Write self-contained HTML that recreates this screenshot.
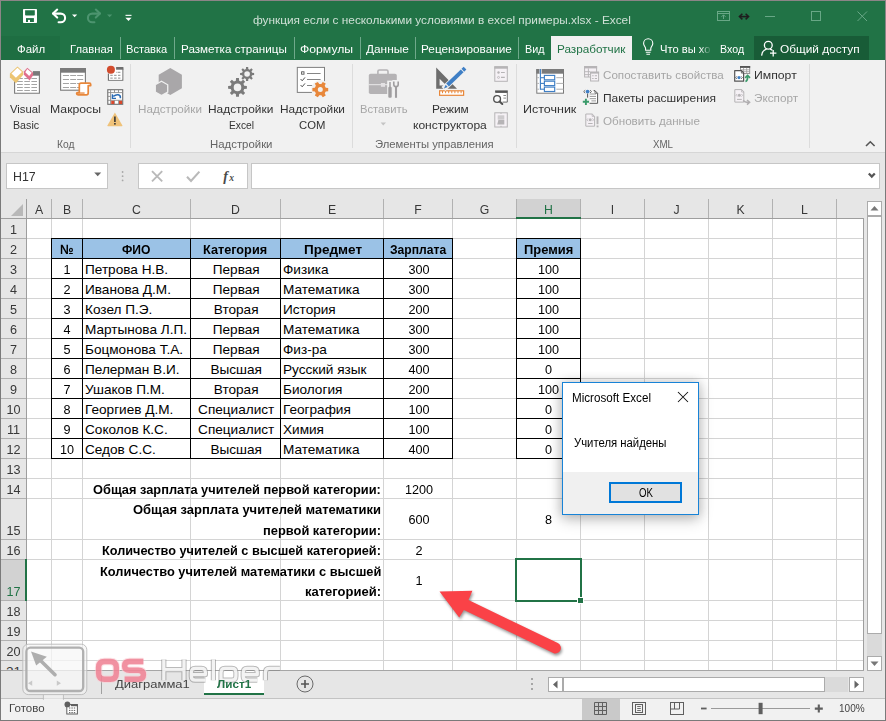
<!DOCTYPE html><html><head><meta charset="utf-8"><title>Excel</title><style>
*{box-sizing:border-box;margin:0;padding:0}
html,body{width:886px;height:721px;overflow:hidden;background:#fff}
body{font-family:"Liberation Sans",sans-serif;font-size:12px;color:#222;position:relative}
.a{position:absolute;white-space:nowrap}
.t{position:absolute;white-space:nowrap;line-height:1;transform-origin:0 50%}
.c{position:absolute;white-space:nowrap;line-height:1;text-align:center}
.r{position:absolute;white-space:nowrap;line-height:1;text-align:right}
.cell{font-size:13.6px;color:#000}
.hd{font-size:13.6px;color:#383838}
.nw{transform:scaleX(.93);transform-origin:50% 50%}
.bw{transform:scaleX(.945);transform-origin:50% 50%}
.cw{transform:scaleX(.9);transform-origin:50% 50%}
svg{overflow:visible}
</style></head><body>
<div class="a" style="left:0px;top:0px;width:886px;height:721px;background:#f1f1f1;"></div>
<div class="a" style="left:0px;top:0px;width:886px;height:60px;background:#217346;"></div>
<div class="t" style="left:253.00px;top:14.0px;font-size:11.6px;color:#cfe0d6;transform:scaleX(1.0201);">функция если с несколькими условиями в excel примеры.xlsx - Excel</div>
<div class="a" style="left:1px;top:36px;width:59px;height:24px;background:#1e6e42;"></div>
<div class="t" style="left:16.70px;top:43.1px;font-size:11.6px;color:#fff;transform:scaleX(0.9861);">Файл</div>
<div class="t" style="left:69.50px;top:43.1px;font-size:11.6px;color:#fff;transform:scaleX(0.9699);">Главная</div>
<div class="t" style="left:126.30px;top:43.1px;font-size:11.6px;color:#fff;transform:scaleX(0.9573);">Вставка</div>
<div class="t" style="left:181.40px;top:43.1px;font-size:11.6px;color:#fff;transform:scaleX(1.0059);">Разметка страницы</div>
<div class="t" style="left:300.40px;top:43.1px;font-size:11.6px;color:#fff;transform:scaleX(1.0528);">Формулы</div>
<div class="t" style="left:366.20px;top:43.1px;font-size:11.6px;color:#fff;transform:scaleX(1.0224);">Данные</div>
<div class="t" style="left:421.30px;top:43.1px;font-size:11.6px;color:#fff;transform:scaleX(1.0154);">Рецензирование</div>
<div class="t" style="left:524.50px;top:43.1px;font-size:11.6px;color:#fff;transform:scaleX(0.9317);">Вид</div>
<div class="a" style="left:120px;top:37px;width:1px;height:22px;background:#6fa98b;"></div>
<div class="a" style="left:174px;top:37px;width:1px;height:22px;background:#6fa98b;"></div>
<div class="a" style="left:294px;top:37px;width:1px;height:22px;background:#6fa98b;"></div>
<div class="a" style="left:360px;top:37px;width:1px;height:22px;background:#6fa98b;"></div>
<div class="a" style="left:415px;top:37px;width:1px;height:22px;background:#6fa98b;"></div>
<div class="a" style="left:518px;top:37px;width:1px;height:22px;background:#6fa98b;"></div>
<div class="a" style="left:551px;top:36px;width:81px;height:25px;background:#f1f1f1;"></div>
<div class="t" style="left:556.50px;top:43.1px;font-size:11.6px;color:#217346;transform:scaleX(1.0117);">Разработчик</div>
<div class="t" style="left:659.50px;top:43.1px;font-size:11.6px;color:#fff;transform:scaleX(0.9628);">Что вы хо</div>
<div class="a" style="left:700px;top:38px;width:14px;height:21px;background:linear-gradient(90deg,rgba(33,115,70,0),#217346 85%);"></div>
<div class="t" style="left:719.60px;top:43.1px;font-size:11.6px;color:#fff;transform:scaleX(0.9189);">Вход</div>
<div class="a" style="left:754px;top:36px;width:115px;height:24px;background:#185c37;"></div>
<div class="t" style="left:780.40px;top:43.1px;font-size:11.6px;color:#fff;transform:scaleX(1.0215);">Общий доступ</div>
<div class="a" style="left:1px;top:60px;width:884px;height:92px;background:#f1f1f1;"></div>
<div class="a" style="left:1px;top:152px;width:884px;height:1px;background:#d6d6d6;"></div>
<div class="a" style="left:130px;top:64px;width:1px;height:84px;background:#dcdcdc;"></div>
<div class="a" style="left:352px;top:64px;width:1px;height:84px;background:#dcdcdc;"></div>
<div class="a" style="left:516px;top:64px;width:1px;height:84px;background:#dcdcdc;"></div>
<div class="a" style="left:809px;top:64px;width:1px;height:84px;background:#dcdcdc;"></div>
<div class="t" style="left:10.30px;top:103.7px;font-size:11.5px;color:#333;transform:scaleX(0.9767);">Visual</div>
<div class="t" style="left:12.70px;top:119.8px;font-size:11.5px;color:#333;transform:scaleX(0.9280);">Basic</div>
<div class="t" style="left:49.50px;top:103.7px;font-size:11.5px;color:#333;transform:scaleX(1.0646);">Макросы</div>
<div class="t" style="left:56.80px;top:138.8px;font-size:11.5px;color:#646464;transform:scaleX(0.8923);">Код</div>
<div class="t" style="left:138.00px;top:103.7px;font-size:11.5px;color:#a6a6a6;transform:scaleX(1.0139);">Надстройки</div>
<div class="t" style="left:208.00px;top:103.7px;font-size:11.5px;color:#333;transform:scaleX(1.0345);">Надстройки</div>
<div class="t" style="left:229.00px;top:119.8px;font-size:11.5px;color:#333;transform:scaleX(0.8889);">Excel</div>
<div class="t" style="left:280.00px;top:103.7px;font-size:11.5px;color:#333;transform:scaleX(1.0297);">Надстройки</div>
<div class="t" style="left:299.40px;top:119.8px;font-size:11.5px;color:#333;transform:scaleX(0.9823);">COM</div>
<div class="t" style="left:209.80px;top:138.8px;font-size:11.5px;color:#646464;transform:scaleX(0.9901);">Надстройки</div>
<div class="t" style="left:359.50px;top:103.7px;font-size:11.5px;color:#a6a6a6;transform:scaleX(0.9744);">Вставить</div>
<div class="t" style="left:432.00px;top:103.7px;font-size:11.5px;color:#333;transform:scaleX(1.0366);">Режим</div>
<div class="t" style="left:412.60px;top:119.8px;font-size:11.5px;color:#333;transform:scaleX(1.0482);">конструктора</div>
<div class="t" style="left:375.20px;top:138.8px;font-size:11.5px;color:#646464;transform:scaleX(0.9792);">Элементы управления</div>
<div class="t" style="left:523.20px;top:103.7px;font-size:11.5px;color:#333;transform:scaleX(1.0863);">Источник</div>
<div class="t" style="left:602.70px;top:70.2px;font-size:11.5px;color:#a6a6a6;transform:scaleX(1.0107);">Сопоставить свойства</div>
<div class="t" style="left:602.70px;top:93.2px;font-size:11.5px;color:#333;transform:scaleX(1.0406);">Пакеты расширения</div>
<div class="t" style="left:602.70px;top:116.2px;font-size:11.5px;color:#a6a6a6;transform:scaleX(1.0120);">Обновить данные</div>
<div class="t" style="left:753.70px;top:70.2px;font-size:11.5px;color:#333;transform:scaleX(1.0634);">Импорт</div>
<div class="t" style="left:753.70px;top:93.2px;font-size:11.5px;color:#a6a6a6;transform:scaleX(1.0197);">Экспорт</div>
<div class="t" style="left:652.50px;top:138.8px;font-size:11.5px;color:#646464;transform:scaleX(0.8466);">XML</div>
<div class="a" style="left:1px;top:153px;width:884px;height:46px;background:#e6e6e6;"></div>
<div class="a" style="left:6px;top:163px;width:102px;height:26px;background:#fff;border:1px solid #c6c6c6"></div>
<div class="t" style="left:13.40px;top:171.3px;font-size:12.5px;color:#333;transform:scaleX(0.9880);">H17</div>
<div class="a" style="left:138px;top:163px;width:110px;height:26px;background:#fff;border:1px solid #c6c6c6"></div>
<div class="a" style="left:251px;top:163px;width:629px;height:26px;background:#fff;border:1px solid #c6c6c6"></div>
<div class="a" style="left:1px;top:199px;width:862px;height:471px;background:#fff;"></div>
<div class="a" style="left:1px;top:199px;width:862px;height:19px;background:#e6e6e6;"></div>
<div class="a" style="left:1px;top:199px;width:25px;height:471px;background:#e6e6e6;"></div>
<div class="a" style="left:517px;top:199px;width:63px;height:19px;background:#d2d2d2;"></div>
<div class="a" style="left:1px;top:560px;width:25px;height:40px;background:#d2d2d2;"></div>
<div class="a" style="left:26px;top:219px;width:1px;height:451px;background:#d4d4d4;"></div>
<div class="a" style="left:51px;top:219px;width:1px;height:451px;background:#d4d4d4;"></div>
<div class="a" style="left:51px;top:199px;width:1px;height:19px;background:#b1b1b1;"></div>
<div class="a" style="left:82px;top:219px;width:1px;height:451px;background:#d4d4d4;"></div>
<div class="a" style="left:82px;top:199px;width:1px;height:19px;background:#b1b1b1;"></div>
<div class="a" style="left:190px;top:219px;width:1px;height:451px;background:#d4d4d4;"></div>
<div class="a" style="left:190px;top:199px;width:1px;height:19px;background:#b1b1b1;"></div>
<div class="a" style="left:280px;top:219px;width:1px;height:451px;background:#d4d4d4;"></div>
<div class="a" style="left:280px;top:199px;width:1px;height:19px;background:#b1b1b1;"></div>
<div class="a" style="left:383px;top:219px;width:1px;height:451px;background:#d4d4d4;"></div>
<div class="a" style="left:383px;top:199px;width:1px;height:19px;background:#b1b1b1;"></div>
<div class="a" style="left:452px;top:219px;width:1px;height:451px;background:#d4d4d4;"></div>
<div class="a" style="left:452px;top:199px;width:1px;height:19px;background:#b1b1b1;"></div>
<div class="a" style="left:516px;top:219px;width:1px;height:451px;background:#d4d4d4;"></div>
<div class="a" style="left:516px;top:199px;width:1px;height:19px;background:#b1b1b1;"></div>
<div class="a" style="left:580px;top:219px;width:1px;height:451px;background:#d4d4d4;"></div>
<div class="a" style="left:580px;top:199px;width:1px;height:19px;background:#b1b1b1;"></div>
<div class="a" style="left:644px;top:219px;width:1px;height:451px;background:#d4d4d4;"></div>
<div class="a" style="left:644px;top:199px;width:1px;height:19px;background:#b1b1b1;"></div>
<div class="a" style="left:708px;top:219px;width:1px;height:451px;background:#d4d4d4;"></div>
<div class="a" style="left:708px;top:199px;width:1px;height:19px;background:#b1b1b1;"></div>
<div class="a" style="left:772px;top:219px;width:1px;height:451px;background:#d4d4d4;"></div>
<div class="a" style="left:772px;top:199px;width:1px;height:19px;background:#b1b1b1;"></div>
<div class="a" style="left:836px;top:219px;width:1px;height:451px;background:#d4d4d4;"></div>
<div class="a" style="left:836px;top:199px;width:1px;height:19px;background:#b1b1b1;"></div>
<div class="a" style="left:27px;top:218px;width:836px;height:1px;background:#d4d4d4;"></div>
<div class="a" style="left:27px;top:238px;width:836px;height:1px;background:#d4d4d4;"></div>
<div class="a" style="left:1px;top:238px;width:25px;height:1px;background:#b1b1b1;"></div>
<div class="a" style="left:27px;top:258px;width:836px;height:1px;background:#d4d4d4;"></div>
<div class="a" style="left:1px;top:258px;width:25px;height:1px;background:#b1b1b1;"></div>
<div class="a" style="left:27px;top:278px;width:836px;height:1px;background:#d4d4d4;"></div>
<div class="a" style="left:1px;top:278px;width:25px;height:1px;background:#b1b1b1;"></div>
<div class="a" style="left:27px;top:298px;width:836px;height:1px;background:#d4d4d4;"></div>
<div class="a" style="left:1px;top:298px;width:25px;height:1px;background:#b1b1b1;"></div>
<div class="a" style="left:27px;top:318px;width:836px;height:1px;background:#d4d4d4;"></div>
<div class="a" style="left:1px;top:318px;width:25px;height:1px;background:#b1b1b1;"></div>
<div class="a" style="left:27px;top:338px;width:836px;height:1px;background:#d4d4d4;"></div>
<div class="a" style="left:1px;top:338px;width:25px;height:1px;background:#b1b1b1;"></div>
<div class="a" style="left:27px;top:358px;width:836px;height:1px;background:#d4d4d4;"></div>
<div class="a" style="left:1px;top:358px;width:25px;height:1px;background:#b1b1b1;"></div>
<div class="a" style="left:27px;top:378px;width:836px;height:1px;background:#d4d4d4;"></div>
<div class="a" style="left:1px;top:378px;width:25px;height:1px;background:#b1b1b1;"></div>
<div class="a" style="left:27px;top:398px;width:836px;height:1px;background:#d4d4d4;"></div>
<div class="a" style="left:1px;top:398px;width:25px;height:1px;background:#b1b1b1;"></div>
<div class="a" style="left:27px;top:418px;width:836px;height:1px;background:#d4d4d4;"></div>
<div class="a" style="left:1px;top:418px;width:25px;height:1px;background:#b1b1b1;"></div>
<div class="a" style="left:27px;top:438px;width:836px;height:1px;background:#d4d4d4;"></div>
<div class="a" style="left:1px;top:438px;width:25px;height:1px;background:#b1b1b1;"></div>
<div class="a" style="left:27px;top:458px;width:836px;height:1px;background:#d4d4d4;"></div>
<div class="a" style="left:1px;top:458px;width:25px;height:1px;background:#b1b1b1;"></div>
<div class="a" style="left:27px;top:478px;width:836px;height:1px;background:#d4d4d4;"></div>
<div class="a" style="left:1px;top:478px;width:25px;height:1px;background:#b1b1b1;"></div>
<div class="a" style="left:27px;top:498px;width:836px;height:1px;background:#d4d4d4;"></div>
<div class="a" style="left:1px;top:498px;width:25px;height:1px;background:#b1b1b1;"></div>
<div class="a" style="left:27px;top:539px;width:836px;height:1px;background:#d4d4d4;"></div>
<div class="a" style="left:1px;top:539px;width:25px;height:1px;background:#b1b1b1;"></div>
<div class="a" style="left:27px;top:559px;width:836px;height:1px;background:#d4d4d4;"></div>
<div class="a" style="left:1px;top:559px;width:25px;height:1px;background:#b1b1b1;"></div>
<div class="a" style="left:27px;top:600px;width:836px;height:1px;background:#d4d4d4;"></div>
<div class="a" style="left:1px;top:600px;width:25px;height:1px;background:#b1b1b1;"></div>
<div class="a" style="left:27px;top:620px;width:836px;height:1px;background:#d4d4d4;"></div>
<div class="a" style="left:1px;top:620px;width:25px;height:1px;background:#b1b1b1;"></div>
<div class="a" style="left:27px;top:640px;width:836px;height:1px;background:#d4d4d4;"></div>
<div class="a" style="left:1px;top:640px;width:25px;height:1px;background:#b1b1b1;"></div>
<div class="a" style="left:27px;top:660px;width:836px;height:1px;background:#d4d4d4;"></div>
<div class="a" style="left:1px;top:660px;width:25px;height:1px;background:#b1b1b1;"></div>
<div class="a" style="left:1px;top:218px;width:862px;height:1px;background:#9e9e9e;"></div>
<div class="a" style="left:26px;top:199px;width:1px;height:471px;background:#9e9e9e;"></div>
<div class="a" style="left:863px;top:218px;width:1px;height:452px;background:#9e9e9e;"></div>
<div class="a" style="left:516px;top:217px;width:65px;height:2px;background:#217346;"></div>
<div class="a" style="left:25px;top:559px;width:2px;height:42px;background:#217346;"></div>
<div class="c hd cw" style="left:27px;width:24px;top:203px;color:#383838">A</div>
<div class="c hd cw" style="left:52px;width:30px;top:203px;color:#383838">B</div>
<div class="c hd cw" style="left:83px;width:107px;top:203px;color:#383838">C</div>
<div class="c hd cw" style="left:191px;width:89px;top:203px;color:#383838">D</div>
<div class="c hd cw" style="left:281px;width:102px;top:203px;color:#383838">E</div>
<div class="c hd cw" style="left:384px;width:68px;top:203px;color:#383838">F</div>
<div class="c hd cw" style="left:453px;width:63px;top:203px;color:#383838">G</div>
<div class="c hd cw" style="left:517px;width:63px;top:203px;color:#217346">H</div>
<div class="c hd cw" style="left:581px;width:63px;top:203px;color:#383838">I</div>
<div class="c hd cw" style="left:645px;width:63px;top:203px;color:#383838">J</div>
<div class="c hd cw" style="left:709px;width:63px;top:203px;color:#383838">K</div>
<div class="c hd cw" style="left:773px;width:63px;top:203px;color:#383838">L</div>
<div class="c hd nw" style="left:1px;width:25px;top:223px;color:#383838">1</div>
<div class="c hd nw" style="left:1px;width:25px;top:243px;color:#383838">2</div>
<div class="c hd nw" style="left:1px;width:25px;top:263px;color:#383838">3</div>
<div class="c hd nw" style="left:1px;width:25px;top:283px;color:#383838">4</div>
<div class="c hd nw" style="left:1px;width:25px;top:303px;color:#383838">5</div>
<div class="c hd nw" style="left:1px;width:25px;top:323px;color:#383838">6</div>
<div class="c hd nw" style="left:1px;width:25px;top:343px;color:#383838">7</div>
<div class="c hd nw" style="left:1px;width:25px;top:363px;color:#383838">8</div>
<div class="c hd nw" style="left:1px;width:25px;top:383px;color:#383838">9</div>
<div class="c hd nw" style="left:1px;width:25px;top:403px;color:#383838">10</div>
<div class="c hd nw" style="left:1px;width:25px;top:423px;color:#383838">11</div>
<div class="c hd nw" style="left:1px;width:25px;top:443px;color:#383838">12</div>
<div class="c hd nw" style="left:1px;width:25px;top:463px;color:#383838">13</div>
<div class="c hd nw" style="left:1px;width:25px;top:483px;color:#383838">14</div>
<div class="c hd nw" style="left:1px;width:25px;top:524px;color:#383838">15</div>
<div class="c hd nw" style="left:1px;width:25px;top:544px;color:#383838">16</div>
<div class="c hd nw" style="left:1px;width:25px;top:585px;color:#217346">17</div>
<div class="c hd nw" style="left:1px;width:25px;top:605px;color:#383838">18</div>
<div class="c hd nw" style="left:1px;width:25px;top:625px;color:#383838">19</div>
<div class="c hd nw" style="left:1px;width:25px;top:645px;color:#383838">20</div>
<div class="a" style="left:1px;top:660px;width:25px;height:10px;overflow:hidden"><div class="c hd" style="left:0;width:25px;top:5px">21</div></div>
<svg class="a" style="left:8px;top:203px;" width="16" height="14" viewBox="0 0 16 14"><path d="M15 1 L15 13 L3 13 Z" fill="#b8b8b8"/></svg>
<div class="a" style="left:52px;top:239px;width:401px;height:19px;background:#9bc2e6;"></div>
<div class="a" style="left:517px;top:239px;width:63px;height:19px;background:#9bc2e6;"></div>
<div class="a" style="left:51px;top:238px;width:402px;height:1px;background:#000;"></div>
<div class="a" style="left:516px;top:238px;width:65px;height:1px;background:#000;"></div>
<div class="a" style="left:51px;top:258px;width:402px;height:1px;background:#000;"></div>
<div class="a" style="left:516px;top:258px;width:65px;height:1px;background:#000;"></div>
<div class="a" style="left:51px;top:278px;width:402px;height:1px;background:#000;"></div>
<div class="a" style="left:516px;top:278px;width:65px;height:1px;background:#000;"></div>
<div class="a" style="left:51px;top:298px;width:402px;height:1px;background:#000;"></div>
<div class="a" style="left:516px;top:298px;width:65px;height:1px;background:#000;"></div>
<div class="a" style="left:51px;top:318px;width:402px;height:1px;background:#000;"></div>
<div class="a" style="left:516px;top:318px;width:65px;height:1px;background:#000;"></div>
<div class="a" style="left:51px;top:338px;width:402px;height:1px;background:#000;"></div>
<div class="a" style="left:516px;top:338px;width:65px;height:1px;background:#000;"></div>
<div class="a" style="left:51px;top:358px;width:402px;height:1px;background:#000;"></div>
<div class="a" style="left:516px;top:358px;width:65px;height:1px;background:#000;"></div>
<div class="a" style="left:51px;top:378px;width:402px;height:1px;background:#000;"></div>
<div class="a" style="left:516px;top:378px;width:65px;height:1px;background:#000;"></div>
<div class="a" style="left:51px;top:398px;width:402px;height:1px;background:#000;"></div>
<div class="a" style="left:516px;top:398px;width:65px;height:1px;background:#000;"></div>
<div class="a" style="left:51px;top:418px;width:402px;height:1px;background:#000;"></div>
<div class="a" style="left:516px;top:418px;width:65px;height:1px;background:#000;"></div>
<div class="a" style="left:51px;top:438px;width:402px;height:1px;background:#000;"></div>
<div class="a" style="left:516px;top:438px;width:65px;height:1px;background:#000;"></div>
<div class="a" style="left:51px;top:458px;width:402px;height:1px;background:#000;"></div>
<div class="a" style="left:516px;top:458px;width:65px;height:1px;background:#000;"></div>
<div class="a" style="left:51px;top:238px;width:1px;height:221px;background:#000;"></div>
<div class="a" style="left:82px;top:238px;width:1px;height:221px;background:#000;"></div>
<div class="a" style="left:190px;top:238px;width:1px;height:221px;background:#000;"></div>
<div class="a" style="left:280px;top:238px;width:1px;height:221px;background:#000;"></div>
<div class="a" style="left:383px;top:238px;width:1px;height:221px;background:#000;"></div>
<div class="a" style="left:452px;top:238px;width:1px;height:221px;background:#000;"></div>
<div class="a" style="left:516px;top:238px;width:1px;height:221px;background:#000;"></div>
<div class="a" style="left:580px;top:238px;width:1px;height:221px;background:#000;"></div>
<div class="t" style="left:60.20px;top:243.0px;font-size:13.6px;color:#000;font-weight:bold;transform:scaleX(0.8934);">№</div>
<div class="t" style="left:122.40px;top:243.0px;font-size:13.6px;color:#000;font-weight:bold;transform:scaleX(0.8910);">ФИО</div>
<div class="t" style="left:203.20px;top:243.0px;font-size:13.6px;color:#000;font-weight:bold;transform:scaleX(0.9340);">Категория</div>
<div class="t" style="left:303.70px;top:243.0px;font-size:13.6px;color:#000;font-weight:bold;transform:scaleX(0.9944);">Предмет</div>
<div class="t" style="left:390.00px;top:243.0px;font-size:13.6px;color:#000;font-weight:bold;transform:scaleX(0.8908);">Зарплата</div>
<div class="t" style="left:524.10px;top:243.0px;font-size:13.6px;color:#000;font-weight:bold;transform:scaleX(0.9502);">Премия</div>
<div class="c cell nw" style="left:52px;width:30px;top:263px;">1</div>
<div class="t cell" style="left:85px;top:263px;">Петрова Н.В.</div>
<div class="c cell" style="left:191.7px;width:89.0px;top:263px;">Первая</div>
<div class="t cell" style="left:283px;top:263px;">Физика</div>
<div class="c cell nw" style="left:384.8px;width:68.0px;top:263px;">300</div>
<div class="c cell nw" style="left:517px;width:63px;top:263px;">100</div>
<div class="c cell nw" style="left:52px;width:30px;top:283px;">2</div>
<div class="t cell" style="left:85px;top:283px;">Иванова Д.М.</div>
<div class="c cell" style="left:191.7px;width:89.0px;top:283px;">Первая</div>
<div class="t cell" style="left:283px;top:283px;">Математика</div>
<div class="c cell nw" style="left:384.8px;width:68.0px;top:283px;">300</div>
<div class="c cell nw" style="left:517px;width:63px;top:283px;">100</div>
<div class="c cell nw" style="left:52px;width:30px;top:303px;">3</div>
<div class="t cell" style="left:85px;top:303px;">Козел П.Э.</div>
<div class="c cell" style="left:191.7px;width:89.0px;top:303px;">Вторая</div>
<div class="t cell" style="left:283px;top:303px;">История</div>
<div class="c cell nw" style="left:384.8px;width:68.0px;top:303px;">200</div>
<div class="c cell nw" style="left:517px;width:63px;top:303px;">100</div>
<div class="c cell nw" style="left:52px;width:30px;top:323px;">4</div>
<div class="t cell" style="left:85px;top:323px;">Мартынова Л.П.</div>
<div class="c cell" style="left:191.7px;width:89.0px;top:323px;">Первая</div>
<div class="t cell" style="left:283px;top:323px;">Математика</div>
<div class="c cell nw" style="left:384.8px;width:68.0px;top:323px;">300</div>
<div class="c cell nw" style="left:517px;width:63px;top:323px;">100</div>
<div class="c cell nw" style="left:52px;width:30px;top:343px;">5</div>
<div class="t cell" style="left:85px;top:343px;">Боцмонова Т.А.</div>
<div class="c cell" style="left:191.7px;width:89.0px;top:343px;">Первая</div>
<div class="t cell" style="left:283px;top:343px;">Физ-ра</div>
<div class="c cell nw" style="left:384.8px;width:68.0px;top:343px;">300</div>
<div class="c cell nw" style="left:517px;width:63px;top:343px;">100</div>
<div class="c cell nw" style="left:52px;width:30px;top:363px;">6</div>
<div class="t cell" style="left:85px;top:363px;">Пелерман В.И.</div>
<div class="c cell" style="left:191.7px;width:89.0px;top:363px;">Высшая</div>
<div class="t cell" style="left:283px;top:363px;">Русский язык</div>
<div class="c cell nw" style="left:384.8px;width:68.0px;top:363px;">400</div>
<div class="c cell nw" style="left:517px;width:63px;top:363px;">0</div>
<div class="c cell nw" style="left:52px;width:30px;top:383px;">7</div>
<div class="t cell" style="left:85px;top:383px;">Ушаков П.М.</div>
<div class="c cell" style="left:191.7px;width:89.0px;top:383px;">Вторая</div>
<div class="t cell" style="left:283px;top:383px;">Биология</div>
<div class="c cell nw" style="left:384.8px;width:68.0px;top:383px;">200</div>
<div class="c cell nw" style="left:517px;width:63px;top:383px;">100</div>
<div class="c cell nw" style="left:52px;width:30px;top:403px;">8</div>
<div class="t cell" style="left:85px;top:403px;">Георгиев Д.М.</div>
<div class="c cell" style="left:191.7px;width:89.0px;top:403px;">Специалист</div>
<div class="t cell" style="left:283px;top:403px;">География</div>
<div class="c cell nw" style="left:384.8px;width:68.0px;top:403px;">100</div>
<div class="c cell nw" style="left:517px;width:63px;top:403px;">0</div>
<div class="c cell nw" style="left:52px;width:30px;top:423px;">9</div>
<div class="t cell" style="left:85px;top:423px;">Соколов К.С.</div>
<div class="c cell" style="left:191.7px;width:89.0px;top:423px;">Специалист</div>
<div class="t cell" style="left:283px;top:423px;">Химия</div>
<div class="c cell nw" style="left:384.8px;width:68.0px;top:423px;">100</div>
<div class="c cell nw" style="left:517px;width:63px;top:423px;">0</div>
<div class="c cell nw" style="left:52px;width:30px;top:443px;">10</div>
<div class="t cell" style="left:85px;top:443px;">Седов С.С.</div>
<div class="c cell" style="left:191.7px;width:89.0px;top:443px;">Высшая</div>
<div class="t cell" style="left:283px;top:443px;">Математика</div>
<div class="c cell nw" style="left:384.8px;width:68.0px;top:443px;">400</div>
<div class="c cell nw" style="left:517px;width:63px;top:443px;">0</div>
<div class="t" style="left:93.00px;top:483.0px;font-size:13.6px;color:#000;font-weight:bold;transform:scaleX(0.9423);">Общая зарплата учителей первой категории:</div>
<div class="t" style="left:133.00px;top:503.0px;font-size:13.6px;color:#000;font-weight:bold;transform:scaleX(0.9537);">Общая зарплата учителей математики</div>
<div class="t" style="left:263.00px;top:523.5px;font-size:13.6px;color:#000;font-weight:bold;transform:scaleX(0.9465);">первой категории:</div>
<div class="t" style="left:102.00px;top:544.0px;font-size:13.6px;color:#000;font-weight:bold;transform:scaleX(0.9341);">Количество учителей с высшей категорией:</div>
<div class="t" style="left:99.50px;top:564.7px;font-size:13.6px;color:#000;font-weight:bold;transform:scaleX(0.9436);">Количество учителей математики с высшей</div>
<div class="t" style="left:305.00px;top:584.5px;font-size:13.6px;color:#000;font-weight:bold;transform:scaleX(0.9565);">категорией:</div>
<div class="c cell nw" style="left:384.8px;width:68.0px;top:483px;">1200</div>
<div class="c cell nw" style="left:384.8px;width:68.0px;top:512.5px;">600</div>
<div class="c cell nw" style="left:384.8px;width:68.0px;top:544px;">2</div>
<div class="c cell nw" style="left:384.8px;width:68.0px;top:573.5px;">1</div>
<div class="c cell nw" style="left:517px;width:63px;top:512.5px;">8</div>
<div class="a" style="left:515px;top:558px;width:67px;height:44px;background:transparent;border:2px solid #217346"></div>
<div class="a" style="left:577px;top:597px;width:7px;height:7px;background:#217346;border:1px solid #fff"></div>
<div class="a" style="left:864px;top:199px;width:21px;height:472px;background:#e6e6e6;"></div>
<div class="a" style="left:863px;top:199px;width:1px;height:19px;background:#e6e6e6;"></div>
<div class="a" style="left:867px;top:201px;width:15px;height:15px;background:#fff;border:1px solid #ababab"></div>
<svg class="a" style="left:870px;top:205px;" width="9" height="6" viewBox="0 0 9 6"><path d="M0.5 5.5 L4.5 1 L8.5 5.5 Z" fill="#777"/></svg>
<div class="a" style="left:867px;top:216px;width:15px;height:418px;background:#fff;border:1px solid #ababab"></div>
<div class="a" style="left:867px;top:634px;width:15px;height:22px;background:#dadada;"></div>
<div class="a" style="left:867px;top:656px;width:15px;height:15px;background:#fff;border:1px solid #ababab"></div>
<svg class="a" style="left:870px;top:661px;" width="9" height="6" viewBox="0 0 9 6"><path d="M0.5 0.5 L4.5 5 L8.5 0.5 Z" fill="#777"/></svg>
<div class="a" style="left:1px;top:671px;width:884px;height:27px;background:#e6e6e6;"></div>
<div class="a" style="left:1px;top:670px;width:863px;height:1px;background:#a6a6a6;"></div>
<div class="a" style="left:1px;top:698px;width:884px;height:1px;background:#c3c3c3;"></div>
<div class="a" style="left:101px;top:675px;width:1px;height:19px;background:#a0a0a0;"></div>
<div class="a" style="left:204px;top:671px;width:60px;height:24px;background:#fff;"></div>
<div class="a" style="left:204px;top:693px;width:60px;height:2px;background:#217346;"></div>
<svg class="a" style="left:296px;top:675px;" width="18" height="18" viewBox="0 0 18 18"><circle cx="9" cy="9" r="8" fill="none" stroke="#6a6a6a" stroke-width="1"/><path d="M5 9H13M9 5V13" stroke="#555" stroke-width="1.6"/></svg>
<div class="a" style="left:531px;top:678px;width:2px;height:2px;background:#a6a6a6;"></div>
<div class="a" style="left:531px;top:683px;width:2px;height:2px;background:#a6a6a6;"></div>
<div class="a" style="left:531px;top:688px;width:2px;height:2px;background:#a6a6a6;"></div>
<div class="a" style="left:548px;top:677px;width:15px;height:15px;background:#fff;border:1px solid #ababab"></div>
<svg class="a" style="left:552px;top:680px;" width="6" height="9" viewBox="0 0 6 9"><path d="M5.5 0.5 L1 4.5 L5.5 8.5 Z" fill="#666"/></svg>
<div class="a" style="left:563px;top:677px;width:262px;height:15px;background:#fff;border:1px solid #ababab"></div>
<div class="a" style="left:825px;top:677px;width:23px;height:15px;background:#dadada;"></div>
<div class="a" style="left:849px;top:677px;width:15px;height:15px;background:#fff;border:1px solid #ababab"></div>
<svg class="a" style="left:854px;top:680px;" width="6" height="9" viewBox="0 0 6 9"><path d="M0.5 0.5 L5 4.5 L0.5 8.5 Z" fill="#666"/></svg>
<div class="a" style="left:1px;top:699px;width:884px;height:21px;background:#f1f1f1;"></div>
<div class="t" style="left:9.40px;top:702.5px;font-size:11.5px;color:#444;transform:scaleX(1.0028);">Готово</div>
<div class="t" style="left:839.40px;top:702.5px;font-size:11.5px;color:#444;transform:scaleX(0.8715);">100%</div>
<div class="a" style="left:582px;top:699px;width:38px;height:21px;background:#c9c9c9;"></div>
<div class="a" style="left:0px;top:0px;width:886px;height:1px;background:#8b8587;"></div>
<div class="a" style="left:0px;top:0px;width:1px;height:60px;background:#8b8587;"></div>
<div class="a" style="left:885px;top:0px;width:1px;height:60px;background:#8b8587;"></div>
<div class="a" style="left:0px;top:60px;width:1px;height:661px;background:#7a7a7a;"></div>
<div class="a" style="left:885px;top:60px;width:1px;height:661px;background:#7a7a7a;"></div>
<div class="a" style="left:0px;top:720px;width:886px;height:1px;background:#7a7a7a;"></div>
<svg class="a" style="left:0px;top:0px;" width="886" height="721" viewBox="0 0 886 721"><rect x="23" y="9" width="14" height="14" rx="0.7" fill="#fff"/><path d="M25.1 10.2H34.8V14.9L34.1 15.6H25.8L25.1 14.9Z" fill="#217346"/><rect x="26" y="18.1" width="7.9" height="3.9" fill="#217346"/><rect x="28" y="19.9" width="2" height="2.2" fill="#fff"/><path d="M53.2 13.6H60.8A4.3 4.3 0 0 1 60.8 22.2H58.6" fill="none" stroke="#fff" stroke-width="2.1" stroke-linecap="round"/><path d="M57.2 9.6L53 13.6L57.2 17.6" fill="none" stroke="#fff" stroke-width="2.1" stroke-linecap="round" stroke-linejoin="round"/><path d="M72 14.6H77.2L74.6 17.2Z" fill="#fff"/><path d="M99.8 13.6H92.2A4.3 4.3 0 0 0 92.2 22.2H94.4" fill="none" stroke="#4c946f" stroke-width="2.1" stroke-linecap="round"/><path d="M95.8 9.6L100 13.6L95.8 17.6" fill="none" stroke="#4c946f" stroke-width="2.1" stroke-linecap="round" stroke-linejoin="round"/><path d="M107 14.6H112.2L109.6 17.2Z" fill="#4c946f"/><rect x="125.5" y="14.8" width="6" height="1.1" fill="#fff"/><path d="M125.4 17.8H131.6L128.5 21Z" fill="#fff"/><rect x="717.5" y="11.5" width="12" height="9" fill="none" stroke="#68a786" stroke-width="1"/><path d="M717.5 13.5H729.5" stroke="#68a786" stroke-width="1"/><path d="M723.5 19V15M721.5 16.8L723.5 14.8L725.5 16.8" fill="none" stroke="#68a786" stroke-width="1"/><path d="M740 16.6H748" stroke="#1e1e1e" stroke-width="1.6"/><path d="M742.4 13.8L739.4 16.6L742.4 19.4M745.6 13.8L748.6 16.6L745.6 19.4" fill="none" stroke="#1e1e1e" stroke-width="1.5"/><path d="M765 16.5H775" stroke="#68a786" stroke-width="1"/><rect x="811.5" y="11.5" width="9" height="9" fill="none" stroke="#68a786" stroke-width="1"/><path d="M857.5 11.5L867 21M867 11.5L857.5 21" stroke="#68a786" stroke-width="1"/><path d="M645.6 50.2V48.4C645.6 47 643.6 45.6 643.6 43.4A4.6 4.6 0 0 1 652.8 43.4C652.8 45.6 650.8 47 650.8 48.4V50.2Z" fill="none" stroke="#fff" stroke-width="1.1"/><path d="M645.8 52.2H650.6M646.4 54.2H650" stroke="#fff" stroke-width="1.1"/><circle cx="768.3" cy="45.3" r="3.9" fill="none" stroke="#fff" stroke-width="1.3"/><path d="M761.6 55.6C762.2 51.6 764.6 49.6 766.6 49.2M770 49.2C771 49.4 771.8 49.8 772.4 50.4" fill="none" stroke="#fff" stroke-width="1.3"/><path d="M770 53.2H776.4M773.2 50V56.4" stroke="#fff" stroke-width="1.3"/><rect x="14.6" y="72" width="24.8" height="21.3" fill="#fff"/><path d="M14.6 76V93.3H39.4V72" fill="none" stroke="#7a7a7a" stroke-width="1.1"/><rect x="32.9" y="71.1" width="7.05" height="4.6" fill="#7a7a7a"/><path d="M17 78.5H22.8M24.3 78.5H29.9M31.4 78.5H37" stroke="#a4a4a4" stroke-width="1"/><path d="M17 81.5H22.8M24.3 81.5H29.9M31.4 81.5H37" stroke="#a4a4a4" stroke-width="1"/><path d="M17 84.5H22.8M24.3 84.5H29.9M31.4 84.5H37" stroke="#a4a4a4" stroke-width="1"/><path d="M17 87.5H22.8M24.3 87.5H29.9M31.4 87.5H37" stroke="#a4a4a4" stroke-width="1"/><path d="M17 90.5H22.8M24.3 90.5H29.9M31.4 90.5H37" stroke="#a4a4a4" stroke-width="1"/><path d="M17.5 66.4L23.3 71.7V74.8L15.9 83.3L9.9 77.2V73.6Z" fill="#ecc572"/><path d="M17.5 67.7L22 72L15.9 77.8L11.5 73.5Z" fill="#fff"/><path d="M27.3 67.7L33.1 72.7V75.3L29.6 80.5L23.9 74.7V71.6Z" fill="#e0708c"/><path d="M27.3 69.1L31.7 72.8L29.2 76L25.3 72.2Z" fill="#fff"/><rect x="60.6" y="68.6" width="24.8" height="21.6" fill="#fff" stroke="#7a7a7a" stroke-width="1.1"/><rect x="60.05" y="68.1" width="25.9" height="4.6" fill="#7a7a7a"/><path d="M62.9 75.5H69M70.2 75.5H76.1M77.1 75.5H83.2" stroke="#a4a4a4" stroke-width="1"/><path d="M62.9 79.5H69M70.2 79.5H76.1M77.1 79.5H83.2" stroke="#a4a4a4" stroke-width="1"/><path d="M62.9 83.5H69M70.2 83.5H76.1M77.1 83.5H83.2" stroke="#a4a4a4" stroke-width="1"/><path d="M62.9 87.5H69M70.2 87.5H76.1M77.1 87.5H83.2" stroke="#a4a4a4" stroke-width="1"/><path d="M81 83.1H89.4Q90.7 83.1 90.7 84.4V85.6H88.2V93Q88.2 94.9 86.3 94.9H78Q76.6 94.9 76.6 93.6Q76.6 92.6 77.6 92.6H79.3V84.8Q79.3 83.1 81 83.1Z" fill="#fff" stroke="#e8873a" stroke-width="1.7" stroke-linejoin="round"/><path d="M77 93.7H84.6V92.4H77Z" fill="#e8873a"/><path d="M108.4 73.6V80.3H122.8V68.4" fill="#fff" stroke="#6e6e6e" stroke-width="1.1"/><rect x="109" y="69" width="13.2" height="10.7" fill="#fff"/><rect x="116.1" y="67" width="7.3" height="2.7" fill="#6e6e6e"/><path d="M110.3 75.3H112.7M114.1 75.3H116.6M118 75.3H120.4" stroke="#a6a6a6" stroke-width="1.2"/><path d="M110.3 78.2H112.7M114.1 78.2H116.6M118 78.2H120.4" stroke="#a6a6a6" stroke-width="1.2"/><path d="M116.4 72.4H117.4M118 72.4H120.4" stroke="#a6a6a6" stroke-width="1.2"/><circle cx="110.9" cy="69.8" r="4" fill="#d24c2e"/><rect x="107.8" y="89.7" width="14.9" height="14.6" fill="#fff" stroke="#6e6e6e" stroke-width="1.1"/><path d="M107.8 92.6H122.7M110.6 89.7V104.3M114.5 89.7V92.6M118.5 89.7V92.6M107.8 96.4H110.6M107.8 100.3H122.7M114.4 100.3V104.3M118.6 100.3V104.3" stroke="#8a8a8a" stroke-width="0.9" fill="none"/><rect x="111.2" y="100.8" width="3" height="3.2" fill="#d9472b"/><rect x="119" y="100.8" width="3.1" height="3.2" fill="#d9472b"/><path d="M120.4 98.2C120.8 94.2 116.6 93.8 113.2 96.4" fill="none" stroke="#2b6cb5" stroke-width="1.5"/><path d="M112.4 94.2V98.4H116" fill="none" stroke="#2b6cb5" stroke-width="1.4"/><path d="M114.9 112.4L122.4 125.4Q122.8 126.2 121.8 126.2H108Q107 126.2 107.4 125.4Z" fill="#efc27a"/><path d="M114.9 116.6V122" stroke="#333" stroke-width="1.6"/><rect x="114.1" y="123" width="1.6" height="1.6" fill="#333"/><polygon points="170.30,68.10 181.90,74.80 181.90,88.20 170.30,94.90 158.70,88.20 158.70,74.80" fill="#a9a7a9" stroke="none" stroke-width="0"/><polygon points="161.50,81.20 167.74,84.80 167.74,92.00 161.50,95.60 155.26,92.00 155.26,84.80" fill="#a9a7a9" stroke="#f1f1f1" stroke-width="1.3"/><path d="M246.89 85.97 L246.89 88.83 L244.20 89.06 L243.41 90.96 L245.15 93.03 L243.13 95.05 L241.06 93.31 L239.16 94.10 L238.93 96.79 L236.07 96.79 L235.84 94.10 L233.94 93.31 L231.87 95.05 L229.85 93.03 L231.59 90.96 L230.80 89.06 L228.11 88.83 L228.11 85.97 L230.80 85.74 L231.59 83.84 L229.85 81.77 L231.87 79.75 L233.94 81.49 L235.84 80.70 L236.07 78.01 L238.93 78.01 L239.16 80.70 L241.06 81.49 L243.13 79.75 L245.15 81.77 L243.41 83.84 L244.20 85.74 Z M241.30 87.40 A3.8 3.8 0 1 0 233.70 87.40 A3.8 3.8 0 1 0 241.30 87.40 Z" fill="#7b7b7b" fill-rule="evenodd"/><path d="M254.12 72.93 L254.12 75.07 L252.05 75.23 L251.47 76.63 L252.82 78.21 L251.31 79.72 L249.73 78.37 L248.33 78.95 L248.17 81.02 L246.03 81.02 L245.87 78.95 L244.47 78.37 L242.89 79.72 L241.38 78.21 L242.73 76.63 L242.15 75.23 L240.08 75.07 L240.08 72.93 L242.15 72.77 L242.73 71.37 L241.38 69.79 L242.89 68.28 L244.47 69.63 L245.87 69.05 L246.03 66.98 L248.17 66.98 L248.33 69.05 L249.73 69.63 L251.31 68.28 L252.82 69.79 L251.47 71.37 L252.05 72.77 Z M249.90 74.00 A2.8 2.8 0 1 0 244.30 74.00 A2.8 2.8 0 1 0 249.90 74.00 Z" fill="#7b7b7b" fill-rule="evenodd"/><rect x="297.3" y="67.4" width="27.2" height="25" fill="#fff" stroke="#7f7f7f" stroke-width="1"/><rect x="301.6" y="71.8" width="2.4" height="2.4" fill="none" stroke="#555" stroke-width="0.9"/><path d="M307 73.5H320.6M307 79.5H320.6M307 85.5H312.6" stroke="#666" stroke-width="0.8"/><path d="M300.6 79L302.2 80.8L305 77.4M300.6 85L302.2 86.8L305 83.4" fill="none" stroke="#555" stroke-width="1"/><circle cx="320.5" cy="89.3" r="9.2" fill="#f1f1f1"/><path d="M328.21 87.88 L328.21 91.32 L325.76 91.56 L324.73 93.34 L325.75 95.59 L322.77 97.32 L321.33 95.31 L319.27 95.31 L317.83 97.32 L314.85 95.59 L315.87 93.34 L314.84 91.56 L312.39 91.32 L312.39 87.88 L314.84 87.64 L315.87 85.86 L314.85 83.61 L317.83 81.88 L319.27 83.89 L321.33 83.89 L322.77 81.88 L325.75 83.61 L324.73 85.86 L325.76 87.64 Z M322.80 89.60 A2.5 2.5 0 1 0 317.80 89.60 A2.5 2.5 0 1 0 322.80 89.60 Z" fill="#e8873a" fill-rule="evenodd"/><path d="M377.9 74V71.4Q377.9 70 379.3 70H386.6Q388 70 388 71.4V74" fill="none" stroke="#b5b3b5" stroke-width="1.6"/><rect x="368.8" y="73.8" width="28" height="20.2" rx="1.8" fill="#b5b3b5"/><path d="M368.8 84.7H397" stroke="#f1f1f1" stroke-width="0.9"/><rect x="380.9" y="83" width="4.1" height="3.8" fill="#e4e2e4"/><path d="M390 80.6V98.4" stroke="#f1f1f1" stroke-width="5.6"/><path d="M396 80V98.4" stroke="#f1f1f1" stroke-width="7.4"/><path d="M390 82V87" stroke="#a09ea0" stroke-width="1.5"/><rect x="388.3" y="86.8" width="3.4" height="11" rx="1.1" fill="#a09ea0"/><path d="M396 86.4V97.8" stroke="#a09ea0" stroke-width="2.1"/><path d="M393.8 81.6V84.4A2.2 2.2 0 0 0 398.2 84.4V81.6" fill="none" stroke="#a09ea0" stroke-width="1.6"/><path d="M380.6 122.6H386L383.3 125.4Z" fill="#c4c4c4"/><path d="M436.2 67.6V88.7H457Z M439.6 78.8V85.6H446.4Z" fill="#6d6d6d" fill-rule="evenodd"/><rect x="439.6" y="90.8" width="24" height="4.5" fill="#fff" stroke="#e8873a" stroke-width="1.2"/><path d="M442.5 91V93.2M445.6 91V93.2M448.7 91V93.2M451.8 91V93.2M454.9 91V93.2M458 91V93.2M461.1 91V93.2" stroke="#e8873a" stroke-width="1"/><path d="M467.19 70.05 L463.24 65.94 L441.45 86.90 L445.40 91.01 Z" fill="#f1f1f1"/><path d="M466.35 69.61 L463.65 66.79 L461.49 68.87 L464.19 71.69 Z" fill="#3f7fc5"/><path d="M463.54 72.31 L460.84 69.50 L446.21 83.57 L448.91 86.38 Z" fill="#3f7fc5"/><path d="M447.73 86.89 L445.65 84.73 L444.00 88.40 Z" fill="#3f7fc5"/><rect x="494.8" y="66.8" width="12.5" height="14.5" fill="#f5f1f5" stroke="#b6b4b6" stroke-width="1"/><rect x="494.3" y="66.3" width="13.5" height="2.4" fill="#b6b4b6"/><circle cx="498.5" cy="72.5" r="1.2" fill="#b6b4b6"/><circle cx="498.5" cy="77.4" r="1" fill="none" stroke="#b6b4b6" stroke-width="0.8"/><path d="M501 72.5H504.8M501 77.4H504.8" stroke="#b6b4b6" stroke-width="1.1"/><path d="M495.6 92.4H507.3V102.1H502.6" fill="#fff" stroke="#6e6e6e" stroke-width="1"/><rect x="495.1" y="90.4" width="12.7" height="2.2" fill="#555"/><path d="M503.4 95.5H506M503.4 98.1H506" stroke="#8a8a8a" stroke-width="1"/><circle cx="497.1" cy="99" r="3.4" fill="#f7f7f7" stroke="#505050" stroke-width="1.35"/><path d="M499.6 101.5L502.3 104" stroke="#505050" stroke-width="2" stroke-linecap="round"/><rect x="494.8" y="112.8" width="12.5" height="14.2" fill="#f5f1f5" stroke="#b6b4b6" stroke-width="1"/><rect x="497.7" y="115.3" width="6.6" height="4.4" fill="#cdcbcd"/><path d="M498.4 119.9H504.3V124.4H497.2Z" fill="#b6b4b6"/><path d="M501 112.8V114M501 125.8V127" stroke="#b6b4b6" stroke-width="0.9"/><rect x="536.8" y="69.6" width="26.7" height="23.6" fill="#fff" stroke="#7a7a7a" stroke-width="1"/><rect x="536.3" y="69.1" width="27.7" height="4.6" fill="#7a7a7a"/><rect x="539.4" y="69.1" width="2.3" height="4.6" fill="#f1f1f1"/><path d="M537.3 77.7H539M556.3 77.7H563.5" stroke="#b0b0b0" stroke-width="1"/><path d="M540.4 77.7H544.4" stroke="#3f7fc5" stroke-width="1.1"/><rect x="544.4" y="75.4" width="10.3" height="4.4" fill="#fff" stroke="#3f7fc5" stroke-width="1.15"/><path d="M537.3 83.4H539M556.3 83.4H563.5" stroke="#b0b0b0" stroke-width="1"/><path d="M540.4 83.4H544.4" stroke="#3f7fc5" stroke-width="1.1"/><rect x="544.4" y="81.2" width="10.3" height="4.4" fill="#fff" stroke="#3f7fc5" stroke-width="1.15"/><path d="M537.3 89.2H539M556.3 89.2H563.5" stroke="#b0b0b0" stroke-width="1"/><path d="M540.4 89.2H544.4" stroke="#3f7fc5" stroke-width="1.1"/><rect x="544.4" y="87.1" width="10.3" height="4.4" fill="#fff" stroke="#3f7fc5" stroke-width="1.15"/><path d="M540.4 69.1V89.7" stroke="#3f7fc5" stroke-width="1.15"/><rect x="584.6" y="66.6" width="12" height="10.4" fill="#f5f1f5" stroke="#b6b4b6" stroke-width="1"/><rect x="584.1" y="66.1" width="13" height="2.3" fill="#b6b4b6"/><path d="M588.4 68.4V77M584.6 71.7H590M584.6 74.6H590" stroke="#b6b4b6" stroke-width="0.9"/><rect x="590.6" y="72.2" width="8" height="8.8" fill="#f5f1f5" stroke="#b6b4b6" stroke-width="1"/><rect x="590.1" y="71.7" width="9" height="1.9" fill="#b6b4b6"/><path d="M592.2 75.8H593.6M594.8 75.8H597M592.2 78.5H593.6M594.8 78.5H597" stroke="#b6b4b6" stroke-width="1.1"/><path d="M590 90.7H595L597.6 93.3V103.3H590Z" fill="#fff"/><path d="M593.6 90.7H595L597.6 93.3V103.3H589.6" fill="none" stroke="#555" stroke-width="1"/><path d="M595 90.7V93.3H597.6" fill="none" stroke="#555" stroke-width="0.8"/><path d="M589.8 94H596M589.8 96.4H596M589.8 98.7H596M591.4 100.9H596" stroke="#8c8c8c" stroke-width="0.9"/><circle cx="587.6" cy="91.6" r="1.9" fill="#3f7fc5"/><path d="M585.2 90.2L583.7 91.6L585.2 93M590 90.2L591.5 91.6L590 93" fill="none" stroke="#444" stroke-width="0.8"/><path d="M587.6 93.6V97.6" stroke="#444" stroke-width="0.9"/><path d="M582.8 101.8H589M585.9 98.7V104.9" stroke="#3a9a6a" stroke-width="1.9"/><path d="M585.8 114H592.2L594.6 116.4V126.2H585.8Z" fill="#f5f1f5" stroke="#b6b4b6" stroke-width="1"/><path d="M592.2 114V116.4H594.6" fill="none" stroke="#b6b4b6" stroke-width="0.8"/><circle cx="590.2" cy="119.8" r="1.5" fill="#b6b4b6"/><path d="M588 118.4L586.8 119.8L588 121.2M592.4 118.4L593.6 119.8L592.4 121.2" fill="none" stroke="#b6b4b6" stroke-width="0.8"/><path d="M588.2 123.5H592.6" stroke="#b6b4b6" stroke-width="1"/><path d="M597.5 116.4V124.2" stroke="#b6b4b6" stroke-width="1.9"/><rect x="596.6" y="125.5" width="1.9" height="1.8" fill="#b6b4b6"/><rect x="740.5" y="66.5" width="9.2" height="7" fill="#fff" stroke="#8a8a8a" stroke-width="0.9"/><rect x="740" y="66" width="10.2" height="1.9" fill="#555"/><path d="M743.6 67.9V73.5M746.7 67.9V73.5M740.5 69.8H749.7M740.5 71.7H749.7" stroke="#9a9a9a" stroke-width="0.8"/><path d="M734.7 70.7H741.6L743.6 72.9V81.2H734.7Z" fill="#fff" stroke="#555" stroke-width="1.2" stroke-linejoin="round"/><path d="M741.4 70.7V73.1H743.6" fill="none" stroke="#555" stroke-width="0.8"/><circle cx="739" cy="77.6" r="1.55" fill="#3f7fc5"/><path d="M736.9 76.3L735.7 77.6L736.9 78.9M741.1 76.3L742.3 77.6L741.1 78.9" fill="none" stroke="#444" stroke-width="0.8"/><path d="M745.4 81.4C747.4 81 747.7 79.4 747.6 76.2" fill="none" stroke="#3a9a6a" stroke-width="1.7"/><path d="M745.2 77.9L747.6 75.4L750 77.9" fill="none" stroke="#3a9a6a" stroke-width="1.7"/><path d="M734.8 89.6H741.8L743.8 91.8V102.1H734.8Z" fill="#f5f1f5" stroke="#b6b4b6" stroke-width="1"/><path d="M741.6 89.6V92H743.8" fill="none" stroke="#b6b4b6" stroke-width="0.8"/><circle cx="739.3" cy="95.3" r="1.5" fill="#b6b4b6"/><path d="M737.2 94L736 95.3L737.2 96.6M741.4 94L742.6 95.3L741.4 96.6" fill="none" stroke="#b6b4b6" stroke-width="0.8"/><path d="M737 99.4H741.8" stroke="#b6b4b6" stroke-width="1"/><path d="M743.4 100.2C744 101.8 745.6 102.3 749 102.3" fill="none" stroke="#b0aeb0" stroke-width="1.5"/><path d="M747 100L749.6 102.3L747 104.6" fill="none" stroke="#b0aeb0" stroke-width="1.5"/><path d="M866 146L870.3 141.8L874.6 146" fill="none" stroke="#555" stroke-width="1.6"/><path d="M94.2 172.4H101.2L97.7 176.2Z" fill="#666"/><circle cx="122.6" cy="172" r="0.9" fill="#a8a8a8"/><circle cx="122.6" cy="176.2" r="0.9" fill="#a8a8a8"/><circle cx="122.6" cy="180.4" r="0.9" fill="#a8a8a8"/><path d="M152 171.2L162.2 181.4M162.2 171.2L152 181.4" stroke="#b9b9b9" stroke-width="1.9"/><path d="M187 176.8L191 181L199.4 171.6" fill="none" stroke="#b9b9b9" stroke-width="2.1"/><text x="223.2" y="180.6" font-family="Liberation Serif" font-style="italic" font-weight="bold" font-size="14" fill="#4a4a4a">f</text><text x="229.2" y="181" font-family="Liberation Serif" font-style="italic" font-weight="bold" font-size="9.5" fill="#4a4a4a">x</text><path d="M868.8 173.4L871.8 176.6L874.8 173.4" fill="none" stroke="#555" stroke-width="2.2"/><rect x="66.8" y="704.6" width="10.6" height="9.4" fill="#fff" stroke="#5f5f5f" stroke-width="1"/><path d="M69 708H75.6M69 710.4H75.6M69 712.6H75.6" stroke="#5f5f5f" stroke-width="1" stroke-dasharray="1.4 1"/><circle cx="67.4" cy="704.4" r="2.9" fill="#5f5f5f"/><rect x="71" y="704.2" width="6.8" height="2" fill="#5f5f5f"/><path d="M594.5 702.5H606.5V714.5H594.5ZM598.5 702.5V714.5M602.5 702.5V714.5M594.5 706.5H606.5M594.5 710.5H606.5" fill="none" stroke="#5f5f5f" stroke-width="1"/><rect x="632.5" y="702.5" width="13" height="12" fill="none" stroke="#5f5f5f" stroke-width="1"/><rect x="635.5" y="704.5" width="7" height="8" fill="none" stroke="#5f5f5f" stroke-width="1"/><path d="M637.2 706.5H640.8M637.2 708.5H640.8M637.2 710.5H640.8" stroke="#5f5f5f" stroke-width="0.9"/><rect x="670.5" y="702.5" width="13" height="12" fill="none" stroke="#5f5f5f" stroke-width="1"/><path d="M674.5 702.5V709M670.5 709H679.5V702.5" fill="none" stroke="#5f5f5f" stroke-width="1"/><path d="M701 708.5H706.6" stroke="#5f5f5f" stroke-width="1.8"/><path d="M711 708.5H810" stroke="#9a9a9a" stroke-width="1"/><rect x="758.6" y="702.8" width="4" height="11.4" fill="#5f5f5f"/><path d="M814.8 708.6H822.8M818.8 704.6V712.6" stroke="#5f5f5f" stroke-width="2.1"/></svg>
<svg class="a" style="left:0px;top:0px;" width="886" height="721" viewBox="0 0 886 721">

<g style="filter:drop-shadow(1.5px 2.5px 1.7px rgba(0,0,0,.42))" fill="#fa4247" stroke="none">
<path d="M439.5 591.6 L472.4 590.8 L468.5 600.1 L557.8 643.1 A5.4 5.4 0 0 1 553.2 652.9 L463.9 609.9 L459.2 617.4 Z"/>
</g></svg>
<div class="a" style="left:562px;top:382px;width:137px;height:133px;background:#fff;border:1px solid #1883d7;box-shadow:0 0 10px 1px rgba(0,0,0,.17),0 5px 14px rgba(0,0,0,.2)"></div>
<div class="a" style="left:563px;top:472px;width:135px;height:42px;background:#f0f0f0;"></div>
<div class="t" style="left:571.50px;top:391.8px;font-size:12px;color:#000;transform:scaleX(0.9708);">Microsoft Excel</div>
<svg class="a" style="left:678px;top:392px;" width="10" height="10" viewBox="0 0 10 10"><path d="M0 0L10 10M10 0L0 10" stroke="#111" stroke-width="1.05"/></svg>
<div class="t" style="left:574.00px;top:437.3px;font-size:12px;color:#000;transform:scaleX(0.9439);">Учителя найдены</div>
<div class="a" style="left:609px;top:482px;width:73px;height:21px;background:#e1e1e1;border:2px solid #0078d7"></div>
<div class="t" style="left:638.80px;top:487.0px;font-size:12px;color:#000;transform:scaleX(0.8058);">OK</div>
<svg class="a" style="left:0px;top:0px;" width="886" height="721" viewBox="0 0 886 721">
<g fill="none">
<rect x="22.8" y="644.2" width="64" height="50.4" rx="5.5" fill="rgba(244,244,244,0.6)" stroke="rgba(185,185,185,0.9)" stroke-width="1"/>
<path d="M43.4 694.8V699.8M63.4 694.8V699.8" stroke="rgba(185,185,185,0.9)" stroke-width="1"/>
<rect x="43.9" y="695.2" width="19" height="4.6" fill="rgba(244,244,244,0.6)"/>
<rect x="26.4" y="647.6" width="56.8" height="43.4" rx="4" fill="rgba(250,250,250,0.4)" stroke="rgba(172,172,172,0.95)" stroke-width="2.3"/>
<path d="M55 674.7L40 660" stroke="#aeaeae" stroke-width="3.6" stroke-linecap="round"/>
<path d="M31 651.5L46.8 656.8L36.2 665.6Z" fill="#aeaeae"/>
<path d="M28 683.2L32.2 680.6V685.8Z M61 683.2L56.8 680.6V685.8Z" fill="rgba(196,196,196,0.9)"/>
<path d="M104.6 661.5 H110.3 Q116.3 661.5 116.3 667.5 V673.2 Q116.3 679.2 110.3 679.2 H104.6 Q98.6 679.2 98.6 673.2 V667.5 Q98.6 661.5 104.6 661.5 Z M143.4 661.5 H129.6 Q124.6 661.5 124.6 666 Q124.6 670.3 129.6 670.3 H138.4 Q143.4 670.3 143.4 674.8 Q143.4 679.2 138.4 679.2 H124.6" stroke="rgba(250,205,212,0.6)" stroke-width="7.4" stroke-linejoin="round"/>
<path d="M104.6 661.5 H110.3 Q116.3 661.5 116.3 667.5 V673.2 Q116.3 679.2 110.3 679.2 H104.6 Q98.6 679.2 98.6 673.2 V667.5 Q98.6 661.5 104.6 661.5 Z M143.4 661.5 H129.6 Q124.6 661.5 124.6 666 Q124.6 670.3 129.6 670.3 H138.4 Q143.4 670.3 143.4 674.8 Q143.4 679.2 138.4 679.2 H124.6" stroke="rgba(238,118,138,0.74)" stroke-width="5.4" stroke-linejoin="round"/>
<path d="M163.8 659.4 V680.2 M184 659.4 V680.2 M163.8 669.6 H184 M191.3 674.6 H205.4 V672.4 Q205.4 668.4 201.4 668.4 H195.3 Q191.3 668.4 191.3 672.4 V676.2 Q191.3 680.2 195.3 680.2 H205.4 M213.4 659.4 V680.2 M221 688 V672.4 Q221 668.4 225 668.4 H231.9 Q235.9 668.4 235.9 672.4 V676.2 Q235.9 680.2 231.9 680.2 H221 M243.2 674.6 H257.3 V672.4 Q257.3 668.4 253.29999999999998 668.4 H247.2 Q243.2 668.4 243.2 672.4 V676.2 Q243.2 680.2 247.2 680.2 H257.3 M265.4 680.2 V672.4 Q265.4 668.4 269.4 668.4 H279.9" stroke="rgba(130,130,130,0.55)" stroke-width="5.2" stroke-linejoin="round"/>
<path d="M163.8 659.4 V680.2 M184 659.4 V680.2 M163.8 669.6 H184 M191.3 674.6 H205.4 V672.4 Q205.4 668.4 201.4 668.4 H195.3 Q191.3 668.4 191.3 672.4 V676.2 Q191.3 680.2 195.3 680.2 H205.4 M213.4 659.4 V680.2 M221 688 V672.4 Q221 668.4 225 668.4 H231.9 Q235.9 668.4 235.9 672.4 V676.2 Q235.9 680.2 231.9 680.2 H221 M243.2 674.6 H257.3 V672.4 Q257.3 668.4 253.29999999999998 668.4 H247.2 Q243.2 668.4 243.2 672.4 V676.2 Q243.2 680.2 247.2 680.2 H257.3 M265.4 680.2 V672.4 Q265.4 668.4 269.4 668.4 H279.9" stroke="rgba(255,255,255,0.82)" stroke-width="3.2" stroke-linejoin="round"/>
</g></svg>
<div class="t" style="left:114.60px;top:678.8px;font-size:11.8px;color:#444;transform:scaleX(1.1014);">Диаграмма1</div>
<div class="t" style="left:216.50px;top:678.8px;font-size:11.8px;color:#217346;font-weight:bold;transform:scaleX(0.9914);">Лист1</div>
</body></html>
